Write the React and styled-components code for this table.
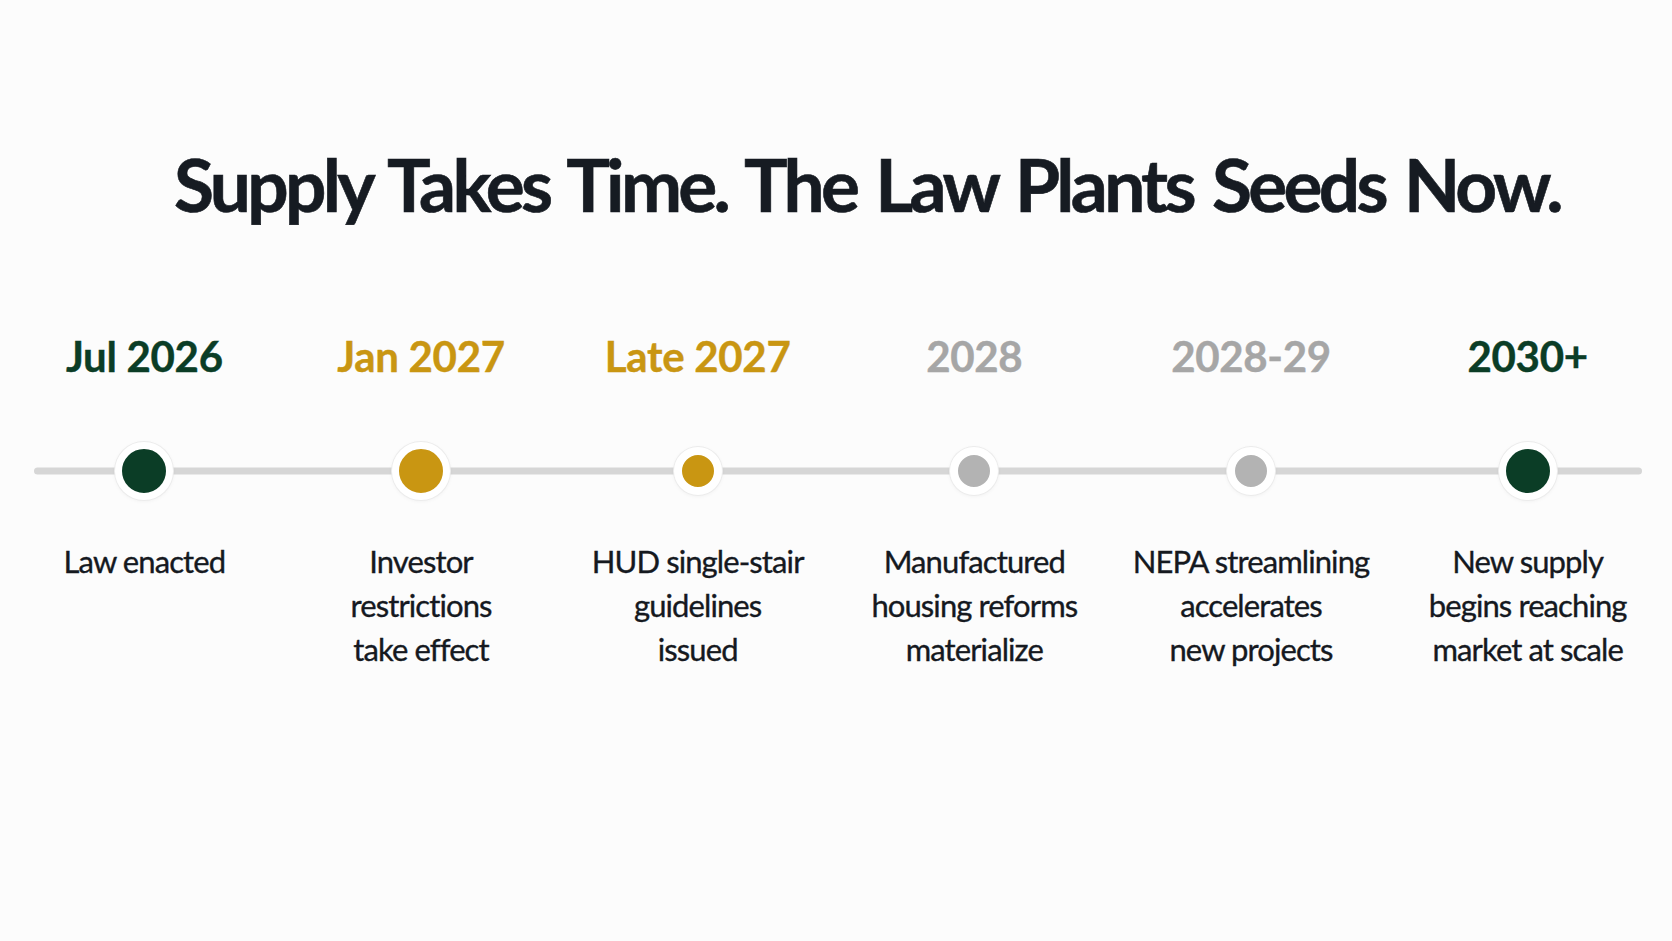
import styled, { createGlobalStyle } from 'styled-components';

const GlobalStyle = createGlobalStyle`
  html, body {
    margin: 0;
    padding: 0;
    background: #fcfcfc;
  }
  body {
    font-family: Lato, "Liberation Sans", sans-serif;
  }
`;

const colors = {
  green: '#0b3d26',
  gold: '#c99612',
  grey: '#a6a6a6',
  greyDot: '#b3b3b3',
  ink: '#15191f',
};

const stages = [
  { date: 'Jul 2026', tone: 'green', big: true, lines: ['Law enacted'] },
  { date: 'Jan 2027', tone: 'gold', big: true, lines: ['Investor', 'restrictions', 'take effect'] },
  { date: 'Late 2027', tone: 'gold', big: false, lines: ['HUD single-stair', 'guidelines', 'issued'] },
  { date: '2028', tone: 'grey', big: false, lines: ['Manufactured', 'housing reforms', 'materialize'] },
  { date: '2028-29', tone: 'grey', big: false, lines: ['NEPA streamlining', 'accelerates', 'new projects'] },
  { date: '2030+', tone: 'green', big: true, lines: ['New supply', 'begins reaching', 'market at scale'] },
];

const dotColor = (tone) => (tone === 'grey' ? colors.greyDot : colors[tone]);

/*
* === Layout ===
*/
const Page = styled.div`
  width: 1672px;
  height: 941px;
  overflow: hidden;
  display: flex;
  flex-direction: column;
`;

const Title = styled.h1`
  margin: 140px 0 0;
  padding-left: 62px;
  text-align: center;
  font-family: Lato, "Liberation Sans", sans-serif;
  font-weight: 700;
  font-size: 73px;
  line-height: 89px;
  letter-spacing: -3.7px;
  word-spacing: 5px;
  color: #161b22;
  -webkit-text-stroke: 0.6px #161b22;
`;

const Row = styled.div`
  display: grid;
  grid-template-columns: repeat(6, 1fr);
  padding: 0 6px;
`;

const DateRow = styled(Row)`
  margin-top: 102px;
`;

const DotRow = styled(Row)`
  position: relative;
  height: 60px;
  margin-top: 60px;
  &::before {
    content: '';
    position: absolute;
    left: 34px;
    right: 30px;
    top: 50%;
    height: 7px;
    transform: translateY(-50%);
    border-radius: 4px;
    background: #d6d6d6;
  }
`;

const DescRow = styled(Row)`
  margin-top: 38px;
`;

/*
* === Timeline parts ===
*/
const DateLabel = styled.div`
  text-align: center;
  font-weight: 700;
  font-size: 42px;
  line-height: 50px;
  letter-spacing: -0.3px;
  color: ${(p) => colors[p.$tone]};
  -webkit-text-stroke: 0.4px ${(p) => colors[p.$tone]};
`;

const DotCell = styled.div`
  display: flex;
  align-items: center;
  justify-content: center;
`;

const Dot = styled.span`
  position: relative;
  z-index: 1;
  display: block;
  width: ${(p) => (p.$big ? 44 : 32)}px;
  height: ${(p) => (p.$big ? 44 : 32)}px;
  border-radius: 50%;
  border: ${(p) => (p.$big ? 7 : 8)}px solid #ffffff;
  background: ${(p) => p.$color};
  box-shadow: 0 0 0 1px #ececec, 0 1px 4px rgba(0, 0, 0, 0.06);
`;

const Desc = styled.div`
  text-align: center;
  font-size: 31px;
  line-height: 44px;
  letter-spacing: -0.9px;
  color: ${colors.ink};
  -webkit-text-stroke: 0.35px ${colors.ink};
`;

export default function App() {
  return (
    <>
      <GlobalStyle />
      <Page>
        <Title>Supply Takes Time. The Law Plants Seeds Now.</Title>
        <DateRow>
          {stages.map((s) => (
            <DateLabel key={s.date} $tone={s.tone}>{s.date}</DateLabel>
          ))}
        </DateRow>
        <DotRow>
          {stages.map((s) => (
            <DotCell key={s.date}>
              <Dot $big={s.big} $color={dotColor(s.tone)} />
            </DotCell>
          ))}
        </DotRow>
        <DescRow>
          {stages.map((s) => (
            <Desc key={s.date}>
              {s.lines.map((l) => (
                <div key={l}>{l}</div>
              ))}
            </Desc>
          ))}
        </DescRow>
      </Page>
    </>
  );
}
